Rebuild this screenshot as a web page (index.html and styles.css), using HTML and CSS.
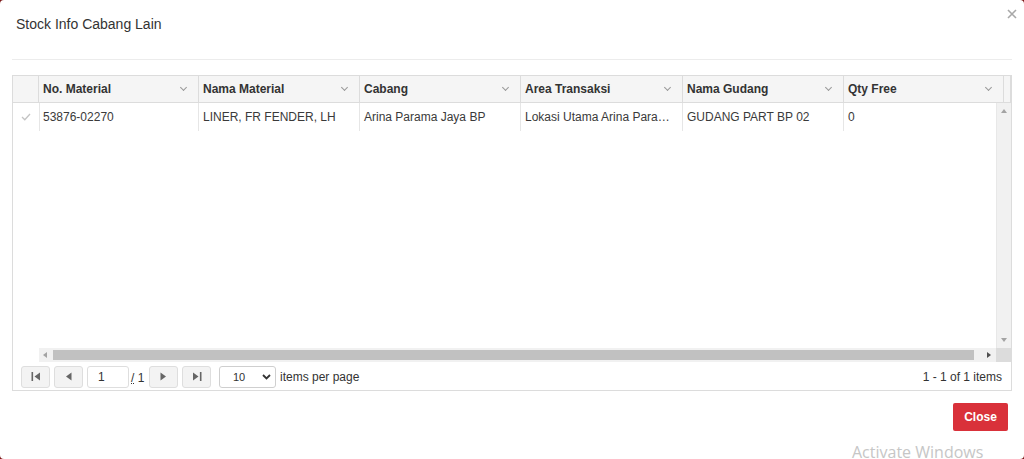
FILE: index.html
```html
<!DOCTYPE html>
<html lang="en">
<head>
    <meta charset="UTF-8">
    <meta name="viewport" content="width=device-width, initial-scale=1.0">
    <title>Stock Info Cabang Lain</title>
    <link rel="stylesheet" href="styles.css">
</head>
<body>
    <div class="modal">
        <div class="modal-header">
            <h4 class="modal-title">Stock Info Cabang Lain</h4>
            <button class="modal-close" aria-label="Close">
                <svg width="10" height="10" viewBox="0 0 10 10"><path d="M1 1L9 9M9 1L1 9" stroke="#a8a8a8" stroke-width="1.6"/></svg>
            </button>
        </div>

        <div class="modal-body">
            <div class="grid">
                <!-- header -->
                <div class="grid-header">
                    <div class="lock-cell"></div>
                    <div class="th w160">No. Material<span class="chev"></span></div>
                    <div class="th w161">Nama Material<span class="chev"></span></div>
                    <div class="th w161">Cabang<span class="chev"></span></div>
                    <div class="th w162">Area Transaksi<span class="chev"></span></div>
                    <div class="th w161">Nama Gudang<span class="chev"></span></div>
                    <div class="th w160">Qty Free<span class="chev"></span></div>
                    <div class="th-filler"></div>
                </div>

                <!-- body -->
                <div class="grid-main">
                    <div class="lock-body">
                        <div class="lock-row">
                            <svg width="10" height="8" viewBox="0 0 10 8"><path d="M1 4L3.8 6.8L9 1" fill="none" stroke="#c4c4c4" stroke-width="1.3"/></svg>
                        </div>
                    </div>
                    <div class="grid-body">
                        <div class="tr">
                            <div class="td w160">53876-02270</div>
                            <div class="td w161">LINER, FR FENDER, LH</div>
                            <div class="td w161">Arina Parama Jaya BP</div>
                            <div class="td w162"><span class="clip">Lokasi Utama Arina Parama Jaya BP</span></div>
                            <div class="td w161">GUDANG PART BP 02</div>
                            <div class="td w160">0</div>
                        </div>
                    </div>
                    <div class="vscroll">
                        <span class="arrow up"></span>
                        <span class="arrow down"></span>
                    </div>
                    <div class="hscroll-lock"></div>
                    <div class="hscroll">
                        <span class="arrow left"></span>
                        <span class="thumb"></span>
                        <span class="arrow right"></span>
                    </div>
                    <div class="scroll-corner"></div>
                </div>

                <!-- pager -->
                <div class="pager">
                    <div class="pager-left">
                        <span class="pager-btn">
                            <svg width="10" height="9" viewBox="0 0 10 9"><rect x="0.5" y="0" width="1.6" height="9" fill="#666"/><path d="M9 0.5V8.5L3.5 4.5Z" fill="#666"/></svg>
                        </span>
                        <span class="pager-btn">
                            <svg width="7" height="9" viewBox="0 0 7 9"><path d="M6.5 0.5V8.5L1 4.5Z" fill="#666"/></svg>
                        </span>
                        <span class="pager-input">1</span>
                        <span class="pager-of"><u>/</u> 1</span>
                        <span class="pager-btn">
                            <svg width="7" height="9" viewBox="0 0 7 9"><path d="M0.5 0.5V8.5L6 4.5Z" fill="#666"/></svg>
                        </span>
                        <span class="pager-btn">
                            <svg width="10" height="9" viewBox="0 0 10 9"><path d="M1 0.5V8.5L6.5 4.5Z" fill="#666"/><rect x="7.9" y="0" width="1.6" height="9" fill="#666"/></svg>
                        </span>
                        <span class="pager-select">
                            10
                            <svg width="9" height="6" viewBox="0 0 9 6"><path d="M1 1L4.5 4.5L8 1" fill="none" stroke="#333" stroke-width="1.8"/></svg>
                        </span>
                        <span class="pager-label">items per page</span>
                    </div>
                    <div class="pager-info">1 - 1 of 1 items</div>
                </div>
            </div>
        </div>

        <div class="modal-footer">
            <button class="btn-close">Close</button>
        </div>

        <div class="watermark">Activate Windows</div>
    </div>
</body>
</html>
```

FILE: styles.css
```css
body {
    margin: 0;
    background-color: #7a1616;
    font-family: Arial, "Liberation Sans", sans-serif;
    color: #333;
    font-size: 12px;
}
.modal {
    position: relative;
    background-color: #fff;
    height: 459px;
    border-radius: 4px;
    overflow: hidden;
}
.modal-header {
    margin: 0 12px;
    height: 59px;
    border-bottom: 1px solid #ececec;
    display: flex;
    justify-content: space-between;
    align-items: flex-start;
}
.modal-title {
    margin: 14px 0 0 4px;
    font-size: 14px;
    font-weight: normal;
    line-height: 20px;
    color: #333;
}
.modal-close {
    margin: 9px -5px 0 0;
    padding: 0;
    border: none;
    background: none;
    width: 10px;
    height: 10px;
    line-height: 0;
}
.modal-body {
    padding: 15px 12px 0;
}
.grid {
    border: 1px solid #dcdcdc;
    height: 314px;
    display: flex;
    flex-direction: column;
}
.grid-header {
    display: flex;
    height: 26px;
    border-bottom: 1px solid #dcdcdc;
    background-color: #f5f5f5;
}
.lock-cell {
    width: 25px;
    border-right: 1px solid #dcdcdc;
    flex-shrink: 0;
}
.th {
    box-sizing: border-box;
    display: flex;
    align-items: center;
    justify-content: space-between;
    padding: 0 12px 0 4px;
    border-right: 1px solid #dcdcdc;
    font-weight: bold;
    color: #333;
    flex-shrink: 0;
}
.th-filler {
    flex: 1;
    border-right: 1px solid #dcdcdc;
}
.chev {
    width: 4px;
    height: 4px;
    border-right: 1px solid #999;
    border-bottom: 1px solid #999;
    transform: rotate(45deg);
    margin-top: -3px;
}
.w160 { width: 160px; }
.w161 { width: 161px; }
.w162 { width: 162px; }

.grid-main {
    flex: 1;
    display: grid;
    grid-template-columns: 26px 1fr 15px;
    grid-template-rows: 1fr 14px;
    min-height: 0;
}
.lock-row {
    height: 28px;
    border-right: 1px solid #e6e6e6;
    display: flex;
    align-items: center;
    justify-content: center;
    margin-right: -1px;
}
.grid-body {
    overflow: hidden;
}
.tr {
    display: flex;
    height: 28px;
}
.td {
    box-sizing: border-box;
    display: flex;
    align-items: center;
    padding: 0 4px;
    border-right: 1px solid #e6e6e6;
    white-space: nowrap;
    overflow: hidden;
    flex-shrink: 0;
    color: #3a3a3a;
}
.clip {
    overflow: hidden;
    text-overflow: ellipsis;
}
.vscroll {
    background-color: #f1f1f1;
    border-left: 1px solid #e8e8e8;
    position: relative;
}
.hscroll-lock {
    background-color: #fff;
}
.hscroll {
    background-color: #f1f1f1;
    display: flex;
    align-items: center;
    padding: 0 5px 0 4px;
}
.thumb {
    flex: 1;
    height: 10px;
    margin: 0 13px 0 6px;
    background-color: #c1c1c1;
}
.scroll-corner {
    background-color: #dcdcdc;
}
.arrow {
    width: 0;
    height: 0;
    border: 3px solid transparent;
}
.arrow.up {
    position: absolute;
    left: 4px;
    top: 3px;
    border-bottom: 4px solid #a3a3a3;
}
.arrow.down {
    position: absolute;
    left: 4px;
    bottom: 3px;
    border-top: 4px solid #a3a3a3;
}
.arrow.left {
    border-right: 4px solid #a3a3a3;
    border-left-width: 0;
}
.arrow.right {
    border-left: 4px solid #505050;
    border-right-width: 0;
}

.pager {
    height: 27px;
    border-top: 1px solid #fff;
    display: flex;
    align-items: center;
    justify-content: space-between;
    padding: 0 9px 0 8px;
}
.pager-left {
    display: flex;
    align-items: center;
}
.pager-btn {
    box-sizing: border-box;
    width: 29px;
    height: 22px;
    margin-right: 4px;
    border: 1px solid #dedede;
    border-radius: 3px;
    background-color: #f3f3f3;
    display: flex;
    align-items: center;
    justify-content: center;
}
.pager-input {
    box-sizing: border-box;
    width: 42px;
    height: 22px;
    border: 1px solid #dedede;
    border-radius: 3px;
    padding-left: 10px;
    line-height: 20px;
    font-size: 12px;
}
.pager-of {
    margin: 0 2px 0 2px;
    width: 16px;
    padding-top: 2px;
}
.pager-of u {
    text-decoration-style: dotted;
}
.pager-select {
    box-sizing: border-box;
    width: 57px;
    height: 22px;
    margin-left: 4px;
    border: 1px solid #cfcfcf;
    border-radius: 3px;
    display: flex;
    align-items: center;
    justify-content: space-between;
    padding: 0 4px 0 13px;
    font-size: 11px;
}
.pager-label {
    margin-left: 4px;
}
.pager-info {
    color: #333;
}

.modal-footer {
    display: flex;
    justify-content: flex-end;
    padding: 12px 16px 0;
}
.btn-close {
    width: 55px;
    height: 28px;
    border: none;
    border-radius: 2px;
    background-color: #d9313a;
    color: #fff;
    font-family: Arial, "Liberation Sans", sans-serif;
    font-size: 12px;
    font-weight: bold;
}
.watermark {
    position: absolute;
    left: 852px;
    top: 442px;
    font-family: "Open Sans", sans-serif;
    font-size: 16px;
    line-height: 20px;
    color: #c6c6c6;
    white-space: nowrap;
}
```
